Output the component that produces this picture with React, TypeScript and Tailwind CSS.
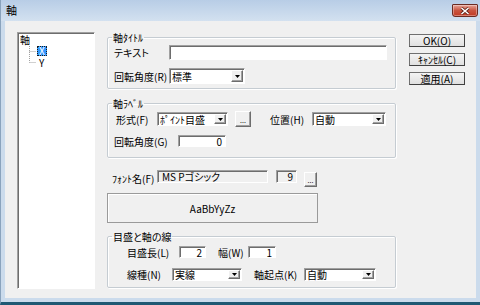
import type { ReactNode } from 'react';

const sunken =
  'border border-t-[#a0a0a0] border-l-[#a0a0a0] border-r-white border-b-white shadow-[inset_1px_1px_0_#6d6d6d]';
const raised =
  'border border-t-white border-l-white border-r-[#6d6d6d] border-b-[#6d6d6d] shadow-[inset_-1px_-1px_0_#a0a0a0] bg-[#f0f0f0]';

function Arrow() {
  return (
    <span className={`${raised} mr-[1px] flex h-[calc(100%-2px)] w-[12px] shrink-0 items-center justify-center`}>
      <svg width="5" height="3" viewBox="0 0 5 3">
        <path d="M0 0h5L2.5 3z" fill="#000" />
      </svg>
    </span>
  );
}

function Combo({ value, className }: { value: string; className: string }) {
  return (
    <div className={`${sunken} ${className} flex items-center bg-white`}>
      <span className="flex-1 whitespace-nowrap pl-[2px] leading-[11px]">{value}</span>
      <Arrow />
    </div>
  );
}

function NumField({ value, className, bg = 'bg-white' }: { value: string; className: string; bg?: string }) {
  return (
    <div className={`${sunken} ${className} ${bg} flex items-center justify-end pr-[3px] leading-[11px]`}>
      {value}
    </div>
  );
}

function Dots({ className }: { className: string }) {
  return (
    <div className={`${raised} ${className} flex items-end justify-center pb-[2px] text-[7px] leading-none`}>
      ...
    </div>
  );
}

function Group({ title, className, children }: { title: string; className: string; children: ReactNode }) {
  return (
    <fieldset className={`rounded-[2px] border border-[#c5ccd2] shadow-[inset_1px_1px_0_white,1px_1px_0_white] ${className}`}>
      <legend className="ml-[4px] px-[1px] leading-[13px]">{title}</legend>
      {children}
    </fieldset>
  );
}

function Button({ children }: { children: ReactNode }) {
  return (
    <div className="flex h-[13px] items-center justify-center whitespace-nowrap border border-[#707070] border-b-[#404040] border-r-[#404040] bg-gradient-to-b from-[#f4f4f4] to-[#e0e0e0] leading-[11px]">
      {children}
    </div>
  );
}

function TreeLine({ last }: { last?: boolean }) {
  return (
    <svg width="12" height="10" viewBox="0 0 12 10" className="shrink-0">
      <path
        d={last ? 'M5.5 0V6.5M5.5 6.5H12' : 'M5.5 0V10M5.5 5.5H12'}
        stroke="#a0a0a0"
        strokeDasharray="1 1"
        fill="none"
      />
    </svg>
  );
}

export default function App() {
  return (
    <div className="flex h-[305px] w-[480px] flex-col overflow-hidden border-b-[3px] border-l border-[#1f5873] border-l-[#8aa3bd] bg-[#cbdbec] font-['Noto_Sans_CJK_JP',sans-serif] text-[10px] text-black [font-feature-settings:'palt']">
      <div className="flex h-[21px] shrink-0 items-start justify-between bg-gradient-to-b from-[#b8cde6] to-[#d3e1f0] pl-[5px] pr-[2px]">
        <span className="mt-[5px] text-[11px] leading-[11px]">軸</span>
        <div className="mt-[4px] flex h-[13px] w-[26px] items-center justify-center rounded-b-[3px] rounded-t-[1px] border border-[#6b2b22] bg-gradient-to-b from-[#e6a398] via-[#c9543f] to-[#c23a22] shadow-[inset_0_0_0_1px_rgba(255,255,255,0.35)]">
          <svg width="10" height="8" viewBox="0 0 10 8">
            <path d="M1.5 1L8.5 7M8.5 1L1.5 7" stroke="#5a1f16" strokeWidth="3" />
            <path d="M1.5 1L8.5 7M8.5 1L1.5 7" stroke="#fff" strokeWidth="1.6" />
          </svg>
        </div>
      </div>

      <div className="mx-[4px] mb-[4px] flex flex-1 bg-[#f0f0f0]">
        <div className={`${sunken} ml-[12px] mt-[11px] h-[257px] w-[78px] shrink-0 bg-white pl-[2px] pt-[1px]`}>
          <div className="h-[12px] leading-[11px]">軸</div>
          <div className="flex h-[10px] items-center pl-[4px]">
            <TreeLine />
            <span className="ml-[1px] flex h-[10px] items-center border border-dotted border-[#1a1a1a] bg-[#3399ff] px-[1px] leading-[8px] text-white">X</span>
          </div>
          <div className="flex h-[11px] items-start pl-[4px]">
            <TreeLine last />
            <span className="ml-[3px] mt-[2px] leading-[9px]">Y</span>
          </div>
        </div>

        <div className="ml-[12px] mt-[10px] flex w-[289px] shrink-0 flex-col">
          <Group title="軸ﾀｲﾄﾙ" className="h-[58px]">
            <div className="mt-[1px] flex h-[15px] items-center pl-[6px]">
              <span className="w-[55px]">テキスト</span>
              <div className={`${sunken} h-full w-[218px] bg-white`} />
            </div>
            <div className="mt-[8px] flex h-[16px] items-center pl-[6px]">
              <span className="w-[55px]">回転角度(R)</span>
              <Combo value="標準" className="h-full w-[76px]" />
            </div>
          </Group>

          <Group title="軸ﾗﾍﾞﾙ" className="mt-[8px] h-[61px]">
            <div className="mt-[1px] flex h-[16px] items-center pl-[8px]">
              <span className="w-[41px]">形式(F)</span>
              <Combo value="ﾎﾟｲﾝﾄ目盛" className="h-[14px] w-[71px]" />
              <Dots className="ml-[7px] h-[16px] w-[16px]" />
              <span className="ml-[19px] w-[42px]">位置(H)</span>
              <Combo value="自動" className="h-[14px] w-[74px]" />
            </div>
            <div className="mt-[8px] flex h-[12px] items-center pl-[6px]">
              <span className="w-[64px]">回転角度(G)</span>
              <NumField value="0" className="h-full w-[48px]" />
            </div>
          </Group>

          <div className="mt-[12px] flex h-[17px] items-start pl-[5px]">
            <span className="mt-[1px] w-[45px] whitespace-nowrap">ﾌｫﾝﾄ名(F)</span>
            <div className={`${sunken} flex h-[13px] w-[111px] items-center pl-[4px] leading-[11px]`}>MS Pゴシック</div>
            <NumField value="9" className="ml-[8px] h-[13px] w-[21px]" bg="bg-[#f0f0f0]" />
            <Dots className="ml-[7px] mt-[2px] h-[15px] w-[13px]" />
          </div>

          <div className="mt-[6px] flex h-[30px] w-[211px] items-center justify-center border border-[#9a9a9a] shadow-[inset_1px_1px_0_white]">
            AaBbYyZz
          </div>

          <Group title="目盛と軸の線" className="mt-[7px] h-[58px]">
            <div className="mt-[3px] flex h-[12px] items-center pl-[19px]">
              <span className="w-[52px]">目盛長(L)</span>
              <NumField value="2" className="h-full w-[27px]" />
              <span className="ml-[12px] w-[30px]">幅(W)</span>
              <NumField value="1" className="h-full w-[28px]" />
            </div>
            <div className="mt-[10px] flex h-[13px] items-center pl-[19px]">
              <span className="w-[45px]">線種(N)</span>
              <Combo value="実線" className="h-full w-[70px]" />
              <span className="ml-[12px] w-[50px]">軸起点(K)</span>
              <Combo value="自動" className="h-full w-[72px]" />
            </div>
          </Group>
        </div>

        <div className="ml-[13px] mt-[13px] flex w-[56px] shrink-0 flex-col gap-[6px]">
          <Button>OK(O)</Button>
          <Button>ｷｬﾝｾﾙ(C)</Button>
          <Button>適用(A)</Button>
        </div>
      </div>
    </div>
  );
}
